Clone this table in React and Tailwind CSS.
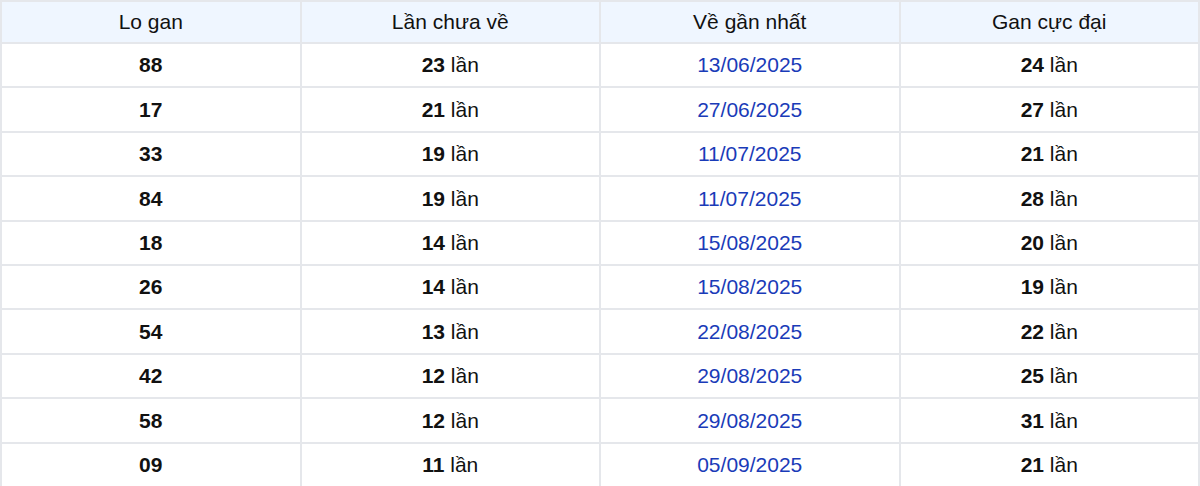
const rows = [
  ["88", "23", "13/06/2025", "24"],
  ["17", "21", "27/06/2025", "27"],
  ["33", "19", "11/07/2025", "21"],
  ["84", "19", "11/07/2025", "28"],
  ["18", "14", "15/08/2025", "20"],
  ["26", "14", "15/08/2025", "19"],
  ["54", "13", "22/08/2025", "22"],
  ["42", "12", "29/08/2025", "25"],
  ["58", "12", "29/08/2025", "31"],
  ["09", "11", "05/09/2025", "21"],
];

const headers = ["Lo gan", "Lần chưa về", "Về gần nhất", "Gan cực đại"];

export default function App() {
  return (
    <div className="w-[1200px] bg-white font-['Liberation_Sans',Arial,sans-serif] text-[21px] text-[#111]">
      <table className="w-full table-fixed border-collapse">
        <thead>
          <tr className="h-[42px] bg-[#eff6ff]">
            {headers.map((h) => (
              <th key={h} className="border-2 border-[#e5e7eb] font-normal p-0 text-center">
                {h}
              </th>
            ))}
          </tr>
        </thead>
        <tbody>
          {rows.map(([lo, chua, date, max]) => (
            <tr key={lo} className="h-[44.4px]">
              <td className="border-2 border-[#e5e7eb] p-0 text-center font-bold">{lo}</td>
              <td className="border-2 border-[#e5e7eb] p-0 text-center">
                <b>{chua}</b> lần
              </td>
              <td className="border-2 border-[#e5e7eb] p-0 text-center text-[#1a3bb8]">{date}</td>
              <td className="border-2 border-[#e5e7eb] p-0 text-center">
                <b>{max}</b> lần
              </td>
            </tr>
          ))}
        </tbody>
      </table>
    </div>
  );
}
